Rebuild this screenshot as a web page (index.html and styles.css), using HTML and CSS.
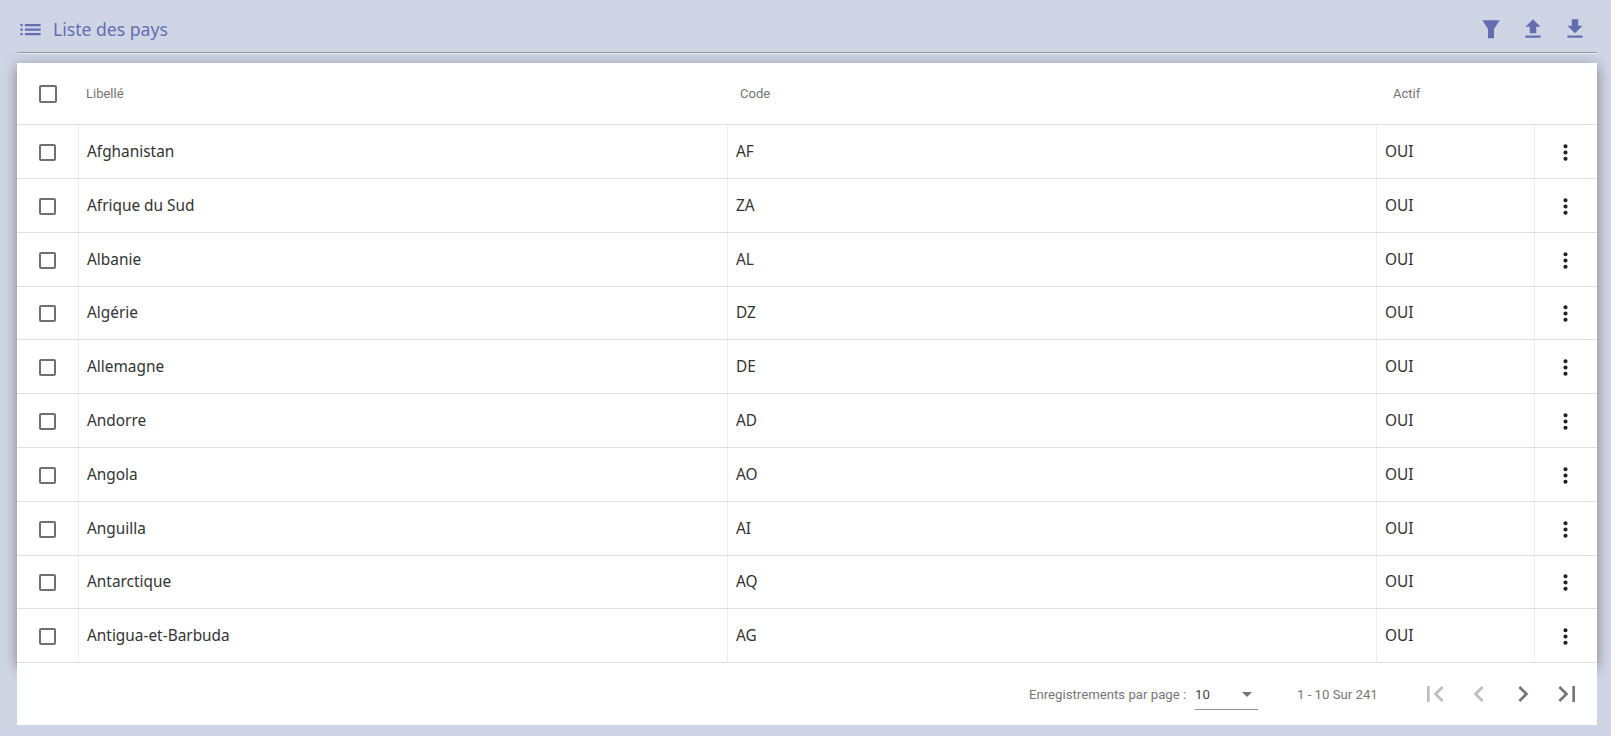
FILE: index.html
```html
<!DOCTYPE html>
<html lang="fr">
<head>
<meta charset="utf-8">
<title>Liste des pays</title>
<link rel="stylesheet" href="styles.css">
</head>
<body>
<header class="toolbar">
  <div class="title">
    <svg class="icon-list" viewBox="0 0 24 24"><path d="M3 13h2v-2H3v2zm0 4h2v-2H3v2zm0-8h2V7H3v2zm4 4h14v-2H7v2zm0 4h14v-2H7v2zM7 7v2h14V7H7z"/></svg>
    <span>Liste des pays</span>
  </div>
  <div class="actions">
    <svg viewBox="0 0 24 24"><path d="M4 4h16l-5.2 8v8.5H9.2V12z"/></svg>
    <svg viewBox="0 0 24 24"><path d="M9 16h6v-6h4l-7-7-7 7h4zm-4 2h14v2H5z"/></svg>
    <svg viewBox="0 0 24 24"><path d="M19 9h-4V3H9v6H5l7 7 7-7zM5 18v2h14v-2H5z"/></svg>
  </div>
</header>
<main class="card">
  <div class="table">
    <div class="row head">
      <div class="c c-check"><span class="box"></span></div>
      <div class="c c-name">Libellé</div>
      <div class="c c-code">Code</div>
      <div class="c c-act">Actif</div>
      <div class="c c-more"></div>
    </div>
    <div class="row"><div class="c c-check"><span class="box"></span></div><div class="c c-name">Afghanistan</div><div class="c c-code">AF</div><div class="c c-act">OUI</div><div class="c c-more"><svg viewBox="0 0 24 24"><path d="M12 8a2 2 0 1 0 0-4 2 2 0 0 0 0 4zm0 2a2 2 0 1 0 0 4 2 2 0 0 0 0-4zm0 6a2 2 0 1 0 0 4 2 2 0 0 0 0-4z"/></svg></div></div>
    <div class="row"><div class="c c-check"><span class="box"></span></div><div class="c c-name">Afrique du Sud</div><div class="c c-code">ZA</div><div class="c c-act">OUI</div><div class="c c-more"><svg viewBox="0 0 24 24"><path d="M12 8a2 2 0 1 0 0-4 2 2 0 0 0 0 4zm0 2a2 2 0 1 0 0 4 2 2 0 0 0 0-4zm0 6a2 2 0 1 0 0 4 2 2 0 0 0 0-4z"/></svg></div></div>
    <div class="row"><div class="c c-check"><span class="box"></span></div><div class="c c-name">Albanie</div><div class="c c-code">AL</div><div class="c c-act">OUI</div><div class="c c-more"><svg viewBox="0 0 24 24"><path d="M12 8a2 2 0 1 0 0-4 2 2 0 0 0 0 4zm0 2a2 2 0 1 0 0 4 2 2 0 0 0 0-4zm0 6a2 2 0 1 0 0 4 2 2 0 0 0 0-4z"/></svg></div></div>
    <div class="row"><div class="c c-check"><span class="box"></span></div><div class="c c-name">Algérie</div><div class="c c-code">DZ</div><div class="c c-act">OUI</div><div class="c c-more"><svg viewBox="0 0 24 24"><path d="M12 8a2 2 0 1 0 0-4 2 2 0 0 0 0 4zm0 2a2 2 0 1 0 0 4 2 2 0 0 0 0-4zm0 6a2 2 0 1 0 0 4 2 2 0 0 0 0-4z"/></svg></div></div>
    <div class="row"><div class="c c-check"><span class="box"></span></div><div class="c c-name">Allemagne</div><div class="c c-code">DE</div><div class="c c-act">OUI</div><div class="c c-more"><svg viewBox="0 0 24 24"><path d="M12 8a2 2 0 1 0 0-4 2 2 0 0 0 0 4zm0 2a2 2 0 1 0 0 4 2 2 0 0 0 0-4zm0 6a2 2 0 1 0 0 4 2 2 0 0 0 0-4z"/></svg></div></div>
    <div class="row"><div class="c c-check"><span class="box"></span></div><div class="c c-name">Andorre</div><div class="c c-code">AD</div><div class="c c-act">OUI</div><div class="c c-more"><svg viewBox="0 0 24 24"><path d="M12 8a2 2 0 1 0 0-4 2 2 0 0 0 0 4zm0 2a2 2 0 1 0 0 4 2 2 0 0 0 0-4zm0 6a2 2 0 1 0 0 4 2 2 0 0 0 0-4z"/></svg></div></div>
    <div class="row"><div class="c c-check"><span class="box"></span></div><div class="c c-name">Angola</div><div class="c c-code">AO</div><div class="c c-act">OUI</div><div class="c c-more"><svg viewBox="0 0 24 24"><path d="M12 8a2 2 0 1 0 0-4 2 2 0 0 0 0 4zm0 2a2 2 0 1 0 0 4 2 2 0 0 0 0-4zm0 6a2 2 0 1 0 0 4 2 2 0 0 0 0-4z"/></svg></div></div>
    <div class="row"><div class="c c-check"><span class="box"></span></div><div class="c c-name">Anguilla</div><div class="c c-code">AI</div><div class="c c-act">OUI</div><div class="c c-more"><svg viewBox="0 0 24 24"><path d="M12 8a2 2 0 1 0 0-4 2 2 0 0 0 0 4zm0 2a2 2 0 1 0 0 4 2 2 0 0 0 0-4zm0 6a2 2 0 1 0 0 4 2 2 0 0 0 0-4z"/></svg></div></div>
    <div class="row"><div class="c c-check"><span class="box"></span></div><div class="c c-name">Antarctique</div><div class="c c-code">AQ</div><div class="c c-act">OUI</div><div class="c c-more"><svg viewBox="0 0 24 24"><path d="M12 8a2 2 0 1 0 0-4 2 2 0 0 0 0 4zm0 2a2 2 0 1 0 0 4 2 2 0 0 0 0-4zm0 6a2 2 0 1 0 0 4 2 2 0 0 0 0-4z"/></svg></div></div>
    <div class="row"><div class="c c-check"><span class="box"></span></div><div class="c c-name">Antigua-et-Barbuda</div><div class="c c-code">AG</div><div class="c c-act">OUI</div><div class="c c-more"><svg viewBox="0 0 24 24"><path d="M12 8a2 2 0 1 0 0-4 2 2 0 0 0 0 4zm0 2a2 2 0 1 0 0 4 2 2 0 0 0 0-4zm0 6a2 2 0 1 0 0 4 2 2 0 0 0 0-4z"/></svg></div></div>
  </div>
  <footer class="pager">
    <span class="pager-label">Enregistrements par page :</span>
    <div class="select"><span>10</span><i class="caret"></i></div>
    <span class="pager-range">1 - 10 Sur 241</span>
    <div class="pager-nav">
      <svg class="off" viewBox="0 0 24 24"><path d="M18.41 16.59 13.82 12l4.59-4.59L17 6l-6 6 6 6zM6 6h2v12H6z"/></svg>
      <svg class="off" viewBox="0 0 24 24"><path d="M15.41 7.41 14 6l-6 6 6 6 1.41-1.41L10.83 12z"/></svg>
      <svg viewBox="0 0 24 24"><path d="M10 6 8.59 7.41 13.17 12l-4.58 4.59L10 18l6-6z"/></svg>
      <svg viewBox="0 0 24 24"><path d="M5.59 7.41 10.18 12l-4.59 4.59L7 18l6-6-6-6zM16 6h2v12h-2z"/></svg>
    </div>
  </footer>
</main>
</body>
</html>
```
FILE: styles.css
```css
* { box-sizing: border-box; }
html, body { margin: 0; height: 100%; }
body {
  background: #d0d5e6;
  padding: 0 14px 11px 17px;
  font-family: "Noto Sans", sans-serif;
  overflow: hidden;
}
.toolbar {
  height: 53px;
  border-bottom: 1px solid #9c9c9c;
  box-shadow: 0 1px 0 #e9ebf3;
  display: flex;
  align-items: center;
  justify-content: space-between;
  padding: 6px 9px 0 0;
  margin-bottom: 10px;
  color: #636eb1;
}
.title { display: flex; align-items: center; gap: 9px; font-size: 17.6px; }
.icon-list { width: 27px; height: 27px; fill: #636eb1; }
.actions { display: flex; gap: 16px; }
.actions svg { width: 26px; height: 26px; fill: #636eb1; }
.card { background: #fff; }
.table {
  box-shadow: 0 5px 5px -3px rgba(0,0,0,.2), 0 8px 10px 1px rgba(0,0,0,.14), 0 3px 14px 2px rgba(0,0,0,.12), 0 0 12px rgba(0,0,0,.1);
}
.row {
  display: grid;
  grid-template-columns: 61px 649px 649px 158px 1fr;
  height: 53.8px;
  border-bottom: 1px solid #e0e0e0;
  background: #fff;
}
.row.head { height: 62.2px; }
.c {
  display: flex;
  align-items: center;
  font-size: 15.4px;
  color: #333;
  padding-left: 8px;
  border-left: 1px solid #ececec;
}
.c-check { padding: 2px 0 0; justify-content: center; border-left: 0; }
.box { width: 17px; height: 17px; border: 2px solid #6f6f6f; border-radius: 2px; }
.head .c {
  border-left: 0;
  font: 400 13px Roboto, sans-serif;
  color: #737373;
}
.head .c-code { padding-left: 13px; }
.head .c-act { padding-left: 17px; }
.head .c-check { padding: 0; }
.head .box { width: 18px; height: 18px; }
.c-more { padding: 2px 2px 0 0; justify-content: center; }
.c-more svg { width: 25px; height: 25px; fill: #212121; }
.pager {
  position: relative;
  height: 62px;
  background: #fff;
  display: flex;
  align-items: center;
  font: 400 13.2px Roboto, sans-serif;
  color: #767676;
  padding-left: 1012px;
}
.pager-label { width: 166px; white-space: nowrap; }
.select {
  width: 63px;
  height: 30px;
  border-bottom: 1px solid #8f8f8f;
  display: flex;
  align-items: center;
  justify-content: space-between;
  padding: 0 6px 0 0;
  color: #444;
  margin-top: 1px;
}
.caret { border: 5px solid transparent; border-top-color: #757575; border-bottom: 0; }
.pager-range { margin-left: 39px; width: 80px; white-space: nowrap; }
.pager-nav { display: flex; gap: 12px; margin-left: 42px; }
.pager-nav svg { width: 32px; height: 32px; fill: #757575; }
.pager-nav svg.off { fill: #bdbdbd; }
```
